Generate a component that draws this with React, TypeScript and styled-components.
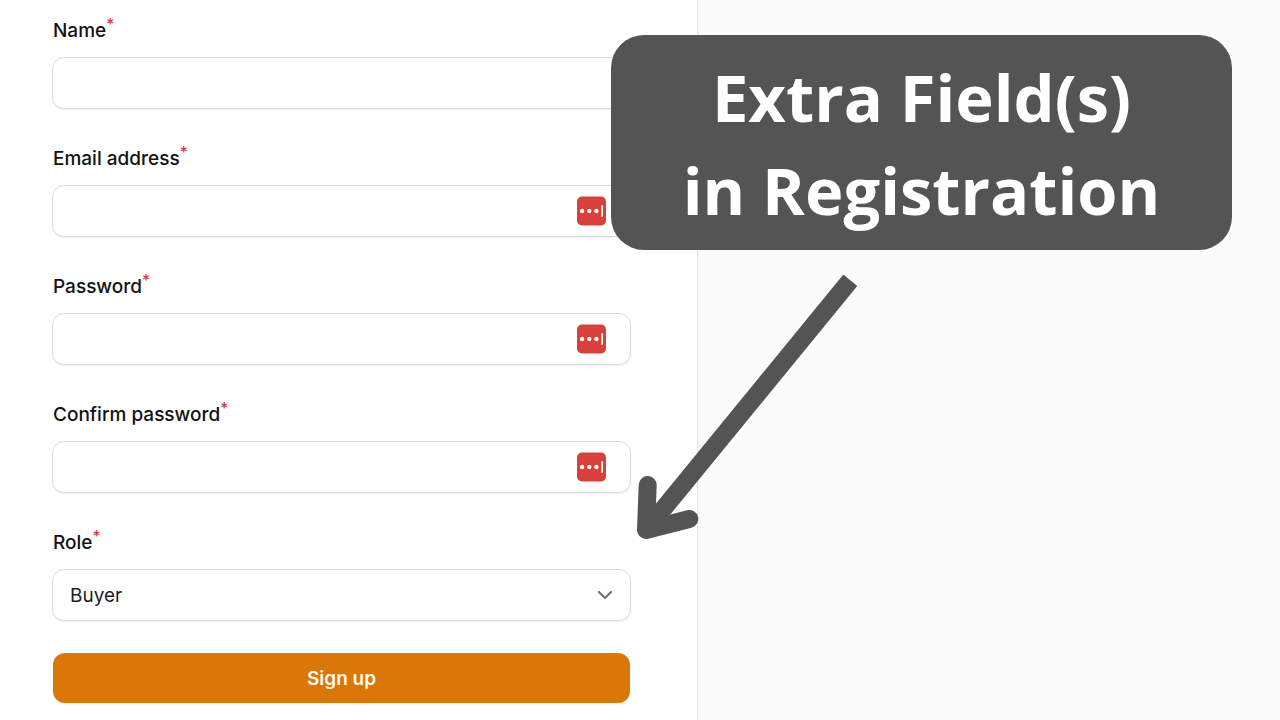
import React from 'react';
import styled, { createGlobalStyle } from 'styled-components';

const GlobalStyle = createGlobalStyle`
  * {
    box-sizing: border-box;
  }
  body {
    margin: 0;
    background: #fbfbfb;
    color: #121214;
    font-family: Inter, 'Liberation Sans', sans-serif;
  }
`;

const Page = styled.div`
  position: relative;
  display: grid;
  grid-template-columns: 698fr 582fr;
  min-height: 100vh;
  overflow: hidden;
`;

const Card = styled.main`
  padding: 13px 66px 16px 52px;
  background: #ffffff;
  border-right: 1px solid #e4e4e5;
  box-shadow: 0 1px 3px rgba(0, 0, 0, 0.08);
`;

const Form = styled.form`
  display: flex;
  flex-direction: column;
  gap: 32px;
`;

const Field = styled.div`
  display: flex;
  flex-direction: column;
  gap: 8px;
`;

const Label = styled.label`
  padding-left: 1px;
  font-size: 19px;
  font-weight: 500;
  line-height: 36px;
`;

const Required = styled.sup`
  color: #dc2b2b;
  font-size: 16px;
  font-weight: 400;
  line-height: 0;
`;

const Control = styled.div`
  position: relative;
  display: flex;
  align-items: center;
  height: 52px;
  border: 1px solid #dcdcde;
  border-radius: 12px;
  background: #ffffff;
  box-shadow: 0 1px 2px rgba(0, 0, 0, 0.07);
`;

const TextInput = styled.input`
  flex: 1;
  min-width: 0;
  height: 100%;
  padding: 0 17px;
  border: 0;
  border-radius: 12px;
  outline: 0;
  background: transparent;
  color: inherit;
  font: inherit;
  font-size: 19px;
`;

const FillButton = styled.button`
  display: block;
  flex: none;
  width: 30px;
  height: 30px;
  margin-right: 24px;
  padding: 0;
  border: 0;
  background: transparent;
  cursor: pointer;
`;

const Select = styled.select`
  flex: 1;
  height: 100%;
  padding: 0 48px 0 17px;
  border: 0;
  border-radius: 12px;
  appearance: none;
  background: transparent;
  color: #1c1c1f;
  font: inherit;
  font-size: 19px;
`;

const Chevron = styled.svg`
  position: absolute;
  right: 16px;
  width: 18px;
  height: 18px;
  pointer-events: none;
`;

const SubmitButton = styled.button`
  height: 50px;
  margin: 0 1px;
  border: 0;
  border-radius: 12px;
  background: #d97708;
  box-shadow: 0 1px 2px rgba(0, 0, 0, 0.08);
  color: #fff8ec;
  font: inherit;
  font-size: 19px;
  font-weight: 600;
  cursor: pointer;
`;

const Banner = styled.aside`
  position: absolute;
  top: 35px;
  right: 48px;
  width: 621px;
  padding: 16px 0 13px;
  border-radius: 33px;
  background: #545454;
  color: #ffffff;
  font-family: 'Open Sans', 'Noto Sans', sans-serif;
  font-size: 65px;
  font-weight: 700;
  line-height: 93px;
  text-align: center;
`;

const Arrow = styled.svg`
  position: absolute;
  top: 260px;
  right: 410px;
  width: 250px;
  height: 290px;
  pointer-events: none;
`;

const fields = [
  { id: 'name', label: 'Name', type: 'text', fill: false },
  { id: 'email', label: 'Email address', type: 'email', fill: true },
  { id: 'password', label: 'Password', type: 'password', fill: true },
  { id: 'confirm', label: 'Confirm password', type: 'password', fill: true },
];

function PasswordManagerIcon() {
  return (
    <svg width="30" height="30" viewBox="0 0 30 30" aria-hidden="true">
      <rect x="1" y="0.5" width="29" height="29" rx="5" fill="#d8403b" />
      <g fill="#fff4ee">
        <circle cx="6.1" cy="15" r="2.2" />
        <circle cx="13.3" cy="15" r="2.2" />
        <circle cx="20.4" cy="15" r="2.2" />
        <rect x="25.3" y="9" width="1.7" height="12" rx="0.8" />
      </g>
    </svg>
  );
}

export default function App() {
  return (
    <>
      <GlobalStyle />
      <Page>
        <Card>
          <Form onSubmit={(event) => event.preventDefault()}>
            {fields.map((field) => (
              <Field key={field.id}>
                <Label htmlFor={field.id}>
                  {field.label}
                  <Required>*</Required>
                </Label>
                <Control>
                  <TextInput id={field.id} type={field.type} />
                  {field.fill && (
                    <FillButton type="button" aria-label="Fill from password manager">
                      <PasswordManagerIcon />
                    </FillButton>
                  )}
                </Control>
              </Field>
            ))}
            <Field>
              <Label htmlFor="role">
                Role<Required>*</Required>
              </Label>
              <Control>
                <Select id="role" defaultValue="buyer">
                  <option value="buyer">Buyer</option>
                  <option value="seller">Seller</option>
                </Select>
                <Chevron viewBox="0 0 18 18" fill="none" aria-hidden="true">
                  <path
                    d="M3 6l6 6 6-6"
                    stroke="#6b7280"
                    strokeWidth="2.2"
                    strokeLinecap="round"
                    strokeLinejoin="round"
                  />
                </Chevron>
              </Control>
            </Field>
            <SubmitButton type="submit">Sign up</SubmitButton>
          </Form>
        </Card>
        <Banner>
          Extra Field(s)
          <br />
          in Registration
        </Banner>
        <Arrow viewBox="0 0 250 290" fill="none" stroke="#545454" aria-hidden="true">
          <path d="M230.3 20.3L26 270" strokeWidth="18" />
          <path
            d="M27.7 225L26 270l43.3-11"
            strokeWidth="18"
            strokeLinecap="round"
            strokeLinejoin="round"
          />
        </Arrow>
      </Page>
    </>
  );
}
